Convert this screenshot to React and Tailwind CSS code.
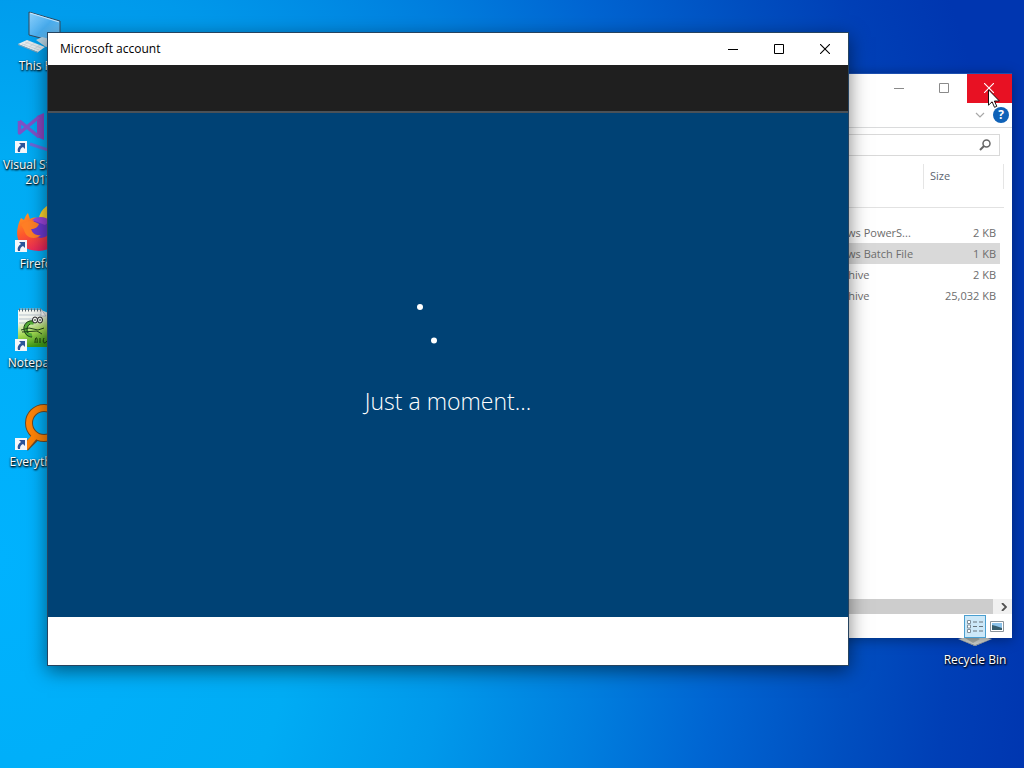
// Desktop - Windows style desktop with an explorer window
// and the account sign-in window on top of it

import React from "react";

const SHORTCUTS = [
  { label: "This PC", icon: ThisPcIcon, linked: false },
  { label: "Visual Studio 2017", icon: VisualStudioIcon, linked: true },
  { label: "Firefox", icon: FirefoxIcon, linked: true },
  { label: "Notepad++", icon: NotepadIcon, linked: true },
  { label: "Everything", icon: EverythingIcon, linked: true },
];

const FILES = [
  { name: "install.ps1", type: "Windows PowerS...", size: "2 KB" },
  { name: "install.bat", type: "Windows Batch File", size: "1 KB", selected: true },
  { name: "config.zip", type: "zip Archive", size: "2 KB" },
  { name: "package.zip", type: "zip Archive", size: "25,032 KB" },
];

function ThisPcIcon() {
  return (
    <svg viewBox="0 0 48 48" className="size-12" aria-hidden="true">
      <defs>
        <linearGradient id="pc-screen" x1="0" y1="0" x2="1" y2="1">
          <stop offset="0" stopColor="#8fd0fa" />
          <stop offset="0.5" stopColor="#49aef0" />
          <stop offset="1" stopColor="#7cc8f8" />
        </linearGradient>
      </defs>
      <path d="M14 4 45 13v22L14 27z" fill="url(#pc-screen)" stroke="#33495c" strokeWidth="1" />
      <path d="M15 5 44 14" stroke="#c9e8fc" strokeWidth="1" />
      <path d="m21 32 6-3 12 3v5l-8 2z" fill="#b9d3e2" />
      <path d="m3 36 9-4 18 7-7 5z" fill="#e6ebee" />
      <path d="m3 36 20 8v1L3 37z" fill="#8da2b0" />
      <path d="m7 36 17 6M10 34l16 6M9 37l6-4M14 39l6-4M19 41l6-4" stroke="#c3ced6" strokeWidth="0.7" />
    </svg>
  );
}

function VisualStudioIcon() {
  return (
    <svg viewBox="0 0 48 48" className="size-12" fill="none" aria-hidden="true">
      <path d="m22 9 7-3v27l-7-3z" fill="#8a45bd" />
      <path d="M4.500 14v12L24 10M4.500 14 24 30" stroke="#7f52c6" strokeWidth="3.500" strokeLinejoin="round" />
      <path d="m15 37 18 6 12-4" stroke="#6b67d6" strokeWidth="3" />
    </svg>
  );
}

function FirefoxIcon() {
  return (
    <svg viewBox="0 0 48 48" className="size-12" aria-hidden="true">
      <defs>
        <linearGradient id="fox-body" x1="0" y1="0" x2="0.5" y2="1">
          <stop offset="0" stopColor="#ffa21f" />
          <stop offset="0.5" stopColor="#ff5a2c" />
          <stop offset="1" stopColor="#e8245d" />
        </linearGradient>
      </defs>
      <path d="M24 12C25 6 29 2 32 0c1 8 13 11 13 25H24z" fill="#ffd52e" />
      <path d="M3 20c1-4 2-6 3-8l3 2c1-3 2-5 4-7l2 6c3-2 7-2 9 0l20 10c1 14-8 22-20 22C8 45-1 36 3 20z" fill="url(#fox-body)" />
      <circle cx="26" cy="22" r="10" fill="#6a39d0" />
      <path d="M6 19c4-4 9-5 14-3l4 2c-1 3-4 5-8 5 1 4 5 7 10 6-5 5-15 4-17-5z" fill="#ff7f26" />
      <path d="M17 14c5-4 14-4 18 1l-5 4z" fill="#9b45db" />
    </svg>
  );
}

function NotepadIcon() {
  return (
    <svg viewBox="0 0 48 48" className="size-12" aria-hidden="true">
      <defs>
        <linearGradient id="note-page" x1="0" y1="0" x2="0.3" y2="1">
          <stop offset="0.3" stopColor="#f4f7f2" />
          <stop offset="0.65" stopColor="#a6db55" />
          <stop offset="1" stopColor="#3f9a18" />
        </linearGradient>
      </defs>
      <path d="M3 5h23l18 7v30H3z" fill="url(#note-page)" />
      <path d="M4 4h22M4 10h25M4 14h14M4 18h8" stroke="#b7c3cb" strokeWidth="1" />
      <path d="M4 5h22" stroke="#5a6770" strokeWidth="3" strokeDasharray="1 2" />
      <path d="M26 4v7h5z" fill="#fff" stroke="#9aabb5" strokeWidth="0.6" />
      <path d="M19 18c-5-2-9 2-8 7 0 4 3 6 6 5" fill="none" stroke="#53ad36" strokeWidth="4" />
      <path d="M18 16c-6-1-10 4-9 9 1 4 4 7 8 7M15 19c-3 2-4 6-2 9M6 25l8-2 9 2 6-2M7 27l15-1 5 3" fill="none" stroke="#22421e" strokeWidth="1" />
      <ellipse cx="20" cy="15" rx="2.500" ry="3" fill="#fff" stroke="#222" />
      <ellipse cx="25" cy="15" rx="2.500" ry="3" fill="#fff" stroke="#222" />
      <path d="M20 14v2M25 14v2M20 38c0-7 3-7 2 0M25 33v5M29 33c-2 4 0 7 3 3" fill="none" stroke="#18380e" strokeWidth="1" />
    </svg>
  );
}

function EverythingIcon() {
  return (
    <svg viewBox="0 0 48 48" className="size-12" fill="none" aria-hidden="true">
      <path d="M10 44 20 34" stroke="#6b4a28" strokeWidth="8" />
      <circle cx="29" cy="19" r="15" stroke="#6b4a28" strokeWidth="8" />
      <circle cx="29" cy="19" r="15" stroke="#ff8408" strokeWidth="6" />
      <path d="M10 44 20 32" stroke="#ff8408" strokeWidth="6" />
    </svg>
  );
}

function RecycleBinIcon() {
  return (
    <svg viewBox="0 0 48 48" className="size-12" aria-hidden="true">
      <path d="m8 8 16-4 16 4-4 30-12 6-12-6z" fill="#cfd6d8" />
      <path d="m7 37 17-4 17 4-17 7z" fill="#d5d8d3" />
      <path d="m7 37 17 6v1zM24 44l17-7-17 6z" fill="#87909a" />
      <path d="m14 36 10-2 5 3-7 4z" fill="#aeb3ad" />
    </svg>
  );
}

function ShortcutArrow() {
  return (
    <svg viewBox="0 0 12 12" className="absolute bottom-[2px] left-0 size-3" aria-hidden="true">
      <path d="M0 0h12v12H0z" fill="#f4f7fa" />
      <path d="M4 2h6v6L8 6C6 7 5 8 5 11H3C2 8 3 6 6 4z" fill="#2c5599" />
    </svg>
  );
}

function DesktopIcon({ label, icon: Icon, linked }) {
  return (
    <button type="button" className="flex h-[99px] w-[76px] flex-col items-center">
      <span className="relative">
        <Icon />
        {linked && <ShortcutArrow />}
      </span>
      <span className="mt-[2px] text-center text-xs leading-[15px] text-white [text-shadow:0_1px_2px_#000,1px_1px_2px_#000]">
        {label}
      </span>
    </button>
  );
}

function MinimizeGlyph() {
  return (
    <svg viewBox="0 0 10 10" className="size-[10px]" shapeRendering="crispEdges" aria-hidden="true">
      <path d="M0 5h10v1H0z" fill="currentColor" />
    </svg>
  );
}

function MaximizeGlyph() {
  return (
    <svg viewBox="0 0 10 10" className="size-[10px]" aria-hidden="true">
      <path d="M.5.5h9v9h-9z" fill="none" stroke="currentColor" />
    </svg>
  );
}

function CloseGlyph() {
  return (
    <svg viewBox="0 0 10 10" className="size-[10px]" aria-hidden="true">
      <path d="m0 0 10 10M10 0 0 10" stroke="currentColor" strokeWidth="1.1" />
    </svg>
  );
}

function ExplorerWindow() {
  return (
    <section
      aria-label="File Explorer"
      className="absolute top-[73px] right-3 bottom-[130px] left-[400px] flex flex-col border-t border-[#1c4fb0] bg-white text-[11px] text-[#6d6d6d] shadow-[0_2px_12px_rgba(0,0,0,0.35)]"
    >
      {/* Caption buttons */}
      <div className="flex h-[29px] justify-end text-[#8a8a8a]">
        <button type="button" aria-label="Minimize" className="flex w-[45px] items-center justify-center pr-[2px] pb-[2px]">
          <MinimizeGlyph />
        </button>
        <button type="button" aria-label="Maximize" className="flex w-[45px] items-center justify-center pr-[2px] pb-[2px]">
          <MaximizeGlyph />
        </button>
        <button type="button" aria-label="Close" className="flex w-[45px] items-center justify-center bg-[#e81123] pr-[2px] pb-[2px] text-white">
          <CloseGlyph />
        </button>
      </div>

      {/* Collapsed ribbon */}
      <div className="flex h-[25px] items-center justify-end gap-2 border-b border-[#dadbdc] pr-[3px]">
        <button type="button" aria-label="Expand the Ribbon">
          <svg viewBox="0 0 10 10" className="size-[10px]" aria-hidden="true">
            <path d="m1 3 4 4 4-4" fill="none" stroke="#a8a8a8" strokeWidth="1.2" />
          </svg>
        </button>
        <button type="button" className="flex size-4 items-center justify-center rounded-full bg-[#0f62b8] text-xs font-bold text-white">
          ?
        </button>
      </div>

      {/* Search */}
      <div className="flex px-3 pt-[6px]">
        <label className="flex h-[22px] flex-1 items-center border border-[#d9d9d9] pr-2">
          <input type="search" aria-label="Search" className="min-w-0 flex-1 outline-none" />
          <svg viewBox="0 0 12 12" className="size-3" fill="none" stroke="#666" aria-hidden="true">
            <circle cx="7.500" cy="4.500" r="3.500" strokeWidth="1.500" />
            <path d="M5 7 1 11" strokeWidth="2" />
          </svg>
        </label>
      </div>

      {/* File list */}
      <div className="flex-1 pt-[8px] pr-2">
        <table className="w-full table-fixed border-collapse">
          <thead>
            <tr className="h-[25px] text-left text-[#5c6470]">
              <th className="font-normal">Name</th>
              <th className="w-[112px] font-normal">Type</th>
              <th className="w-[80px] border-x border-[#e5e5e5] pl-[6px] font-normal">Size</th>
            </tr>
          </thead>
        </table>
        <div className="mt-[18px] border-t border-[#e2e2e2] pt-[14px] pr-1">
          <table className="w-full table-fixed border-collapse">
            <tbody>
              {FILES.map((file) => (
                <tr key={file.name} className={file.selected ? "h-[21px] bg-[#d9d9d9]" : "h-[21px]"}>
                  <td className="pt-[2px]">{file.name}</td>
                  <td className="w-[107px] pt-[2px]">{file.type}</td>
                  <td className="w-[79px] pt-[2px] pr-1 text-right">{file.size}</td>
                </tr>
              ))}
            </tbody>
          </table>
        </div>
      </div>

      {/* Horizontal scrollbar */}
      <div className="flex h-[15px] bg-[#f0f0f0]">
        <div className="flex-1 bg-[#cdcdcd]" />
        <button type="button" aria-label="Scroll right" className="flex w-[19px] items-center justify-center">
          <svg viewBox="0 0 8 8" className="size-2" aria-hidden="true">
            <path d="m3 0 4 4-4 4" fill="none" stroke="#505050" strokeWidth="1.8" />
          </svg>
        </button>
      </div>

      {/* Status bar */}
      <div className="flex h-6 items-center justify-end gap-1 pr-2">
        <button type="button" aria-label="Details view" className="flex h-[23px] w-[22px] items-center justify-center border border-[#4a9fd0] bg-[#cce8f8]">
          <svg viewBox="0 0 16 13" className="h-[13px] w-4 shrink-0" fill="none" aria-hidden="true">
            <path d="M.5.5h3v3h-3zM.5 5h3v3h-3zM.5 9.500h3v3h-3z" fill="#fff" stroke="#7e8e9a" />
            <path d="M6 2h4M12 2h4M6 6.500h4M12 6.500h4M6 11h4M12 11h4" stroke="#68747c" />
          </svg>
        </button>
        <button type="button" aria-label="Large thumbnails">
          <svg viewBox="0 0 14 11" className="h-[11px] w-[14px]" aria-hidden="true">
            <path d="M.5.5h13v10H.5z" fill="#fff" stroke="#8b949b" />
            <path d="M2 2h10v7H2z" fill="#8cc2ea" />
            <path d="m2 4 4 1 6 2v2H2z" fill="#365c6c" />
          </svg>
        </button>
      </div>
    </section>
  );
}

function AccountWindow() {
  return (
    <section
      aria-label="Microsoft account"
      className="absolute top-8 right-[175px] bottom-[102px] left-[47px] flex flex-col border border-[#26435f] bg-white shadow-[0_5px_18px_rgba(0,0,0,0.5)]"
    >
      {/* Title bar */}
      <header className="flex h-8 bg-white text-black">
        <h1 className="flex-1 self-center pl-3 text-xs">Microsoft account</h1>
        <button type="button" aria-label="Minimize" className="flex w-[46px] items-center justify-center">
          <MinimizeGlyph />
        </button>
        <button type="button" aria-label="Maximize" className="flex w-[46px] items-center justify-center">
          <MaximizeGlyph />
        </button>
        <button type="button" aria-label="Close" className="flex w-[46px] items-center justify-center">
          <CloseGlyph />
        </button>
      </header>
      <div className="h-12 border-b-2 border-[#4b5157] bg-[#1f1f1f]" />

      {/* Progress */}
      <main className="flex flex-1 flex-col items-center justify-center bg-[#004275] pb-5 text-white">
        <svg viewBox="0 0 64 64" className="size-16" fill="#fff" aria-hidden="true">
          <circle cx="4" cy="14" r="3" />
          <circle cx="18" cy="47.500" r="3" />
        </svg>
        <p className="mt-7 text-[23px] leading-8 font-light">Just a moment...</p>
      </main>
      <footer className="h-12 bg-white" />
    </section>
  );
}

function Cursor() {
  return (
    <svg viewBox="0 0 12 19" className="absolute top-[89px] right-[24px] h-[19px] w-3" aria-hidden="true">
      <path d="M.5.800v15.400l3.600-3.400 2.400 5.500 2.300-1-2.400-5.300h5z" fill="#fff" stroke="#000" strokeWidth="0.900" />
    </svg>
  );
}

export default function App() {
  return (
    <div className="relative flex h-screen justify-between overflow-hidden bg-[radial-gradient(1000px_1330px_at_0px_560px,#00b2fe_0%,#00acf4_30%,#0099eb_45%,#007ede_60%,#0065d2_72%,#004fc0_85%,#003fb6_95%,#0036b0_104%)] pt-2 pl-[1px] font-['Open_Sans',sans-serif]">
      <nav aria-label="Desktop" className="flex flex-col">
        {SHORTCUTS.map((item) => (
          <DesktopIcon key={item.label} {...item} />
        ))}
      </nav>
      <div className="flex flex-col pt-[594px] pr-[11px]">
        <DesktopIcon label="Recycle Bin" icon={RecycleBinIcon} />
      </div>
      <ExplorerWindow />
      <AccountWindow />
      <Cursor />
    </div>
  );
}
